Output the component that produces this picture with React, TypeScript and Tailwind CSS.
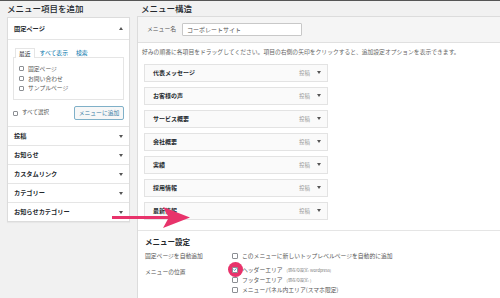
const leftRows = ["投稿", "お知らせ", "カスタムリンク", "カテゴリー", "お知らせカテゴリー"];
const pages = ["固定ページ", "お問い合わせ", "サンプルページ"];
const menuItems = ["代表メッセージ", "お客様の声", "サービス概要", "会社概要", "実績", "採用情報", "最新情報"];

function Caret() {
  return <span className="w-0 h-0 border-l-[2px] border-r-[2px] border-t-[3px] border-l-transparent border-r-transparent border-t-[#555]" />;
}

function Check({ size = "w-[6px] h-[6px]" }: { size?: string }) {
  return <span className={`${size} shrink-0 border border-[#8c8f94] bg-white rounded-[1px]`} />;
}

export default function App() {
  return (
    <div className="relative w-[500px] h-[298px] overflow-hidden bg-[#f1f1f1] font-['Noto_Sans_CJK_JP','Noto_Sans',sans-serif] text-[#23282d]">
      <div className="h-[1px] bg-[#555]" />
      <div className="flex">
        {/* left column */}
        <div className="w-[137px] shrink-0 pl-[7px] pr-[7px]">
          <div className="h-[15px] flex items-center text-[8.5px] font-medium leading-none">メニュー項目を追加</div>
          <div className="mt-[1px] bg-white border border-[#dcdcdc] shadow-[0_1px_1px_rgba(0,0,0,0.04)]">
            <div className="h-[22px] flex items-center justify-between px-[6px] border-b border-[#e5e5e5]">
              <span className="text-[6.2px] font-bold">固定ページ</span>
              <span className="w-0 h-0 border-l-[2px] border-r-[2px] border-b-[3px] border-l-transparent border-r-transparent border-b-[#555]" />
            </div>
            <div className="px-[5px] pt-[8px]">
              <div className="flex items-end text-[5.8px] leading-none">
                <span className="ml-[2px] px-[3px] h-[10px] flex items-center border border-b-0 border-[#e5e5e5] bg-white relative z-10 text-[#23282d]">最近</span>
                <span className="ml-[5px] h-[10px] flex items-center text-[#0073aa]">すべて表示</span>
                <span className="ml-[8px] h-[10px] flex items-center text-[#0073aa]">検索</span>
              </div>
              <div className="-mt-[1px] h-[43px] border border-[#e5e5e5] flex flex-col justify-center gap-[4px] pl-[5px]">
                {pages.map((p) => (
                  <div key={p} className="flex items-center gap-[4px] text-[5.8px] leading-none text-[#555]">
                    <Check size="w-[5px] h-[5px]" />
                    {p}
                  </div>
                ))}
              </div>
              <div className="mt-[6px] flex items-center justify-between">
                <div className="flex items-center gap-[4px] text-[5.5px] leading-none text-[#555]">
                  <Check size="w-[5px] h-[5px]" />
                  すべて選択
                </div>
                <div className="w-[50px] h-[14px] flex items-center justify-center border border-[#7fb0c8] bg-[#f7f7f7] rounded-[2px] text-[5.8px] text-[#3a7ca5]">
                  メニューに追加
                </div>
              </div>
            </div>
            <div className="mt-[6px]">
              {leftRows.map((r) => (
                <div key={r} className="h-[19px] flex items-center justify-between px-[6px] border-t border-[#e5e5e5]">
                  <span className="text-[6.2px] font-bold">{r}</span>
                  <Caret />
                </div>
              ))}
            </div>
          </div>
        </div>

        {/* right column */}
        <div className="flex-1 min-w-0">
          <div className="h-[15px] flex items-center pl-[4px] text-[8.5px] font-medium leading-none whitespace-nowrap">メニュー構造</div>
          <div className="border-l border-t border-[#dcdcdc] bg-white h-[283px]">
            <div className="h-[26px] flex items-center pl-[9px] bg-[#f5f5f5] border-b border-[#e0e0e0]">
              <span className="text-[5.8px] text-[#555] whitespace-nowrap">メニュー名</span>
              <div className="ml-[6px] w-[120px] h-[13px] flex items-center pl-[4px] bg-white border border-[#c8c8c8] rounded-[1px] text-[6px] text-[#555]">
                コーポレートサイト
              </div>
            </div>
            <div className="pl-[4px] pt-[6px] text-[5.8px] leading-none text-[#666] whitespace-nowrap">
              好みの順番に各項目をドラッグしてください。項目の右側の矢印をクリックすると、追加設定オプションを表示できます。
            </div>
            <div className="mt-[9px] ml-[6px] flex flex-col gap-[5px]">
              {menuItems.map((m) => (
                <div key={m} className="w-[184px] h-[18px] flex items-center justify-between pl-[8px] pr-[6px] bg-[#fafafa] border border-[#e3e3e3]">
                  <span className="text-[6px] font-bold">{m}</span>
                  <span className="flex items-center gap-[7px]">
                    <span className="text-[5.5px] text-[#999]">投稿</span>
                    <Caret />
                  </span>
                </div>
              ))}
            </div>
            <div className="mt-[10px] border-t border-[#e5e5e5] pl-[7px] pt-[7px]">
              <div className="text-[7.5px] font-bold leading-none">メニュー設定</div>
              <div className="mt-[6px] grid grid-cols-[87px_1fr] text-[5.8px] leading-none text-[#555]">
                <div className="h-[9px] flex items-center">固定ページを自動追加</div>
                <div className="h-[9px] flex items-center gap-[4px] whitespace-nowrap">
                  <Check />
                  このメニューに新しいトップレベルページを自動的に追加
                </div>
                <div className="h-[13px] mt-[5px] flex items-center">メニューの位置</div>
                <div className="mt-[6px] flex flex-col gap-[3px]">
                  <div className="h-[7px] flex items-center gap-[4px] whitespace-nowrap">
                    <span className="relative flex items-center justify-center">
                      <span className="absolute w-[15px] h-[15px] rounded-full bg-[#e8336b]" />
                      <span className="relative w-[6px] h-[6px] border border-[#8c8f94] bg-white rounded-[1px] flex items-center justify-center">
                        <svg viewBox="0 0 10 10" className="w-[7px] h-[7px]">
                          <path d="M1.5 5 L4 7.5 L8.5 2" fill="none" stroke="#1e8cbe" strokeWidth="2" />
                        </svg>
                      </span>
                    </span>
                    ヘッダーエリア<span className="text-[4px] text-[#777]">(現在の設定: Wordpress)</span>
                  </div>
                  <div className="h-[7px] flex items-center gap-[4px] whitespace-nowrap">
                    <Check />
                    フッターエリア<span className="text-[4px] text-[#777]">(現在の設定: )</span>
                  </div>
                  <div className="h-[7px] flex items-center gap-[4px] whitespace-nowrap">
                    <Check />
                    メニューパネル内エリア(スマホ限定)
                  </div>
                </div>
              </div>
            </div>
          </div>
        </div>
      </div>

      {/* pink arrow pointing at menu items */}
      <svg className="absolute left-[112px] top-[205px]" width="80" height="25" viewBox="0 0 80 25">
        <polygon points="0,11 56,11 51,2 78,12.5 51,23 56,14 0,14" fill="#e8336b" />
      </svg>
    </div>
  );
}
